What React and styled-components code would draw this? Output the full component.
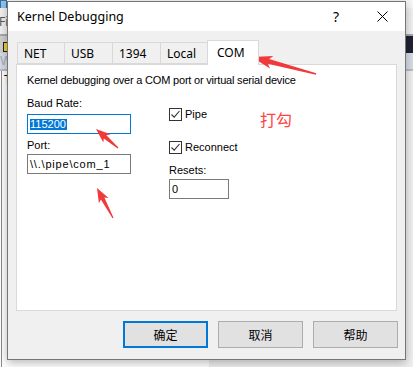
import React from "react";
import styled, { createGlobalStyle } from "styled-components";

const GlobalStyle = createGlobalStyle`
  html, body {
    margin: 0;
    padding: 0;
  }
  body {
    width: 413px;
    height: 367px;
    overflow: hidden;
    font-family: "Noto Sans", "Liberation Sans", sans-serif;
  }
`;

const tabs = [
  { label: "NET", w: 48 },
  { label: "USB", w: 49 },
  { label: "1394", w: 49 },
  { label: "Local", w: 48 },
  { label: "COM", w: 52, active: true },
];

// arrow with a tapered shaft, tail -> tip
const arrowPoints = (tail, tip, headLen, headW, w0, w1) => {
  const dx = tip[0] - tail[0];
  const dy = tip[1] - tail[1];
  const len = Math.hypot(dx, dy);
  const d = [dx / len, dy / len];
  const n = [-d[1], d[0]];
  const neck = [tip[0] - d[0] * headLen, tip[1] - d[1] * headLen];
  const barb = [tip[0] - d[0] * headLen * 1.2, tip[1] - d[1] * headLen * 1.2];
  const p = (b, s) => `${(b[0] + n[0] * s).toFixed(1)},${(b[1] + n[1] * s).toFixed(1)}`;
  return [
    p(tail, w0 / 2),
    p(neck, w1 / 2),
    p(barb, headW / 2),
    `${tip[0]},${tip[1]}`,
    p(barb, -headW / 2),
    p(neck, -w1 / 2),
    p(tail, -w0 / 2),
  ].join(" ");
};

/* ---------- the window behind ---------- */

const Desktop = styled.div`
  position: relative;
  width: 413px;
  height: 367px;
  overflow: hidden;
  display: flex;
  flex-direction: column;
  background: #fff;
`;

const TopStrip = styled.div`
  height: 8px;
  background: #f6f6f6;
  display: flex;
  align-items: center;
`;

const TinyIcon = styled.div`
  width: 5px;
  height: 7px;
  background: ${(p) => p.$color};
  border: 1px solid #3a6ea5;
`;

const MenuBar = styled.div`
  height: 26px;
  background: #f0f0f0;
  display: flex;
  align-items: center;
  justify-content: space-between;
  font-family: "Noto Sans", sans-serif;
  font-size: 12px;
  color: #555;
  border-bottom: 2px solid #a6a6a6;
`;

const MenuText = styled.span`
  margin-left: -1px;
`;

const ToolBar = styled.div`
  height: 17px;
  background: #cfcfcf;
  display: flex;
  align-items: center;
  justify-content: space-between;
`;

const ToolIcon = styled.div`
  width: 5px;
  height: 8px;
  margin-left: 3px;
  margin-top: 4px;
  background: #e8d23a;
  border: 1px solid #222;
`;

const DarkBlock = styled.div`
  width: 10px;
  height: 17px;
  background: #1f2233;
`;

const SubBar = styled.div`
  height: 16px;
  background: #d6dce6;
  border-bottom: 2px solid #b9bcc2;
  font-family: "Liberation Sans", sans-serif;
  font-size: 13px;
  line-height: 16px;
  color: #a8adb6;
`;

const LowerArea = styled.div`
  flex: 1;
  display: flex;
`;

const LeftPane = styled.div`
  flex: 1;
  margin-left: 1px;
  border-left: 1px solid #8a8a8a;
  background: #fff;
  font-family: "Liberation Sans", sans-serif;
  font-size: 12px;
  padding: 2px 0 0 2px;
  color: #000;
`;

const RightPane = styled.div`
  flex: 1;
  background: #efefef;
`;

/* ---------- dialog ---------- */

const Dialog = styled.div`
  position: absolute;
  left: 7px;
  top: 1px;
  width: 397px;
  height: 357px;
  border: 1px solid #767676;
  background: #f0f0f0;
  box-shadow: 0 3px 9px rgba(0, 0, 0, 0.28);
  display: flex;
  flex-direction: column;
`;

const TitleBar = styled.div`
  height: 29px;
  background: #fff;
  display: flex;
  align-items: center;
`;

const Title = styled.div`
  flex: 1;
  padding-left: 9px;
  font-family: "Noto Sans", sans-serif;
  font-size: 12.5px;
  color: #000;
`;

const TitleButton = styled.div`
  width: 46px;
  height: 29px;
  display: flex;
  align-items: center;
  justify-content: center;
  font-family: "Noto Sans", sans-serif;
  font-size: 14px;
  color: #000;
`;

const Body = styled.div`
  flex: 1;
  display: flex;
  flex-direction: column;
  padding: 9px 8px 0 8px;
`;

const TabStrip = styled.div`
  height: 24px;
  display: flex;
  align-items: flex-end;
  padding-left: 1px;
`;

const Tab = styled.div`
  position: relative;
  z-index: ${(p) => (p.$active ? 2 : 1)};
  box-sizing: border-box;
  width: ${(p) => p.$w}px;
  height: ${(p) => (p.$active ? 25 : 22)}px;
  margin-bottom: ${(p) => (p.$active ? -1 : 0)}px;
  margin-left: ${(p) => (p.$first ? 0 : -1)}px;
  padding-left: ${(p) => (p.$active ? 9 : 6)}px;
  padding-bottom: ${(p) => (p.$active ? 1 : 0)}px;
  border: 1px solid #d9d9d9;
  border-bottom: ${(p) => (p.$active ? "none" : "1px solid #d9d9d9")};
  background: ${(p) => (p.$active ? "#fff" : "#f0f0f0")};
  display: flex;
  align-items: center;
  font-family: "Noto Sans", sans-serif;
  font-size: 12px;
  color: #000;
`;

const Panel = styled.div`
  box-sizing: border-box;
  height: 247px;
  background: #fff;
  border: 1px solid #d9d9d9;
  padding: 9px 10px 0 10px;
  font-family: "Liberation Sans", Arial, sans-serif;
  font-size: 11px;
  line-height: 13px;
  color: #000;
`;

const Description = styled.div`
  height: 13px;
  margin-bottom: 10px;
  letter-spacing: -0.2px;
`;

const FormRow = styled.div`
  display: flex;
  gap: 38px;
`;

const Column = styled.div`
  display: flex;
  flex-direction: column;
  width: ${(p) => p.$w}px;
`;

const Label = styled.div`
  height: 13px;
  margin-top: ${(p) => p.$mt || 0}px;
`;

const Field = styled.div`
  box-sizing: border-box;
  width: ${(p) => p.$w}px;
  height: 20px;
  margin-top: ${(p) => p.$mt || 0}px;
  border: 1px solid ${(p) => (p.$focus ? "#0078d7" : "#7a7a7a")};
  background: #fff;
  display: flex;
  align-items: center;
  padding-left: 2px;
  letter-spacing: ${(p) => p.$spacing || 0}px;
`;

const Selected = styled.span`
  background: #0078d7;
  color: #fff;
  padding: 0 1px 0 0;
  line-height: 11px;
`;

const CheckRow = styled.div`
  display: flex;
  align-items: center;
  gap: 3px;
  height: 13px;
  margin-top: ${(p) => p.$mt}px;
`;

const Box = styled.div`
  box-sizing: border-box;
  width: 13px;
  height: 13px;
  border: 1px solid #333;
  background: #fff;
  display: flex;
`;

const Footer = styled.div`
  display: flex;
  justify-content: flex-end;
  gap: 10px;
  margin-top: 10px;
  margin-right: -1px;
`;

const Button = styled.div`
  box-sizing: border-box;
  width: 85px;
  height: 27px;
  background: #e1e1e1;
  border: ${(p) => (p.$default ? "2px solid #0078d7" : "1px solid #adadad")};
  display: flex;
  align-items: center;
  justify-content: center;
  font-family: "Noto Sans CJK SC", "Noto Sans", sans-serif;
  font-size: 12px;
  color: #000;
`;

/* ---------- red annotations ---------- */

const Overlay = styled.svg`
  position: absolute;
  left: 0;
  top: 0;
  pointer-events: none;
`;

const Note = styled.div`
  position: absolute;
  left: 260px;
  top: 111px;
  font-family: "Noto Sans CJK SC", sans-serif;
  font-size: 16px;
  line-height: 16px;
  color: #ff4242;
`;

const CheckMark = () => (
  <svg width="11" height="11" viewBox="0 0 11 11">
    <path d="M1.5 5.5 L4.2 8.2 L9.5 2" fill="none" stroke="#333" strokeWidth="1.1" />
  </svg>
);

const CloseIcon = () => (
  <svg width="11" height="11" viewBox="0 0 11 11">
    <path d="M0.5 0.5 L10.5 10.5 M10.5 0.5 L0.5 10.5" stroke="#000" strokeWidth="1" />
  </svg>
);

export default function App() {
  return (
    <Desktop>
      <GlobalStyle />
      <TopStrip>
        <TinyIcon $color="#8fc3e8" />
      </TopStrip>
      <MenuBar>
        <MenuText>Fi</MenuText>
      </MenuBar>
      <ToolBar>
        <ToolIcon />
        <DarkBlock />
      </ToolBar>
      <SubBar>W</SubBar>
      <LowerArea>
        <LeftPane>T</LeftPane>
        <RightPane />
      </LowerArea>

      <Dialog>
        <TitleBar>
          <Title>Kernel Debugging</Title>
          <TitleButton>?</TitleButton>
          <TitleButton>
            <CloseIcon />
          </TitleButton>
        </TitleBar>
        <Body>
          <TabStrip>
            {tabs.map((t, i) => (
              <Tab key={t.label} $w={t.w} $active={t.active} $first={i === 0}>
                {t.label}
              </Tab>
            ))}
          </TabStrip>
          <Panel>
            <Description>Kernel debugging over a COM port or virtual serial device</Description>
            <FormRow>
              <Column $w={104}>
                <Label>Baud Rate:</Label>
                <Field $w={104} $mt={4} $focus>
                  <Selected>115200</Selected>
                </Field>
                <Label $mt={5}>Port:</Label>
                <Field $w={104} $mt={2} $spacing={0.8}>
                  {"\\\\.\\pipe\\com_1"}
                </Field>
              </Column>
              <Column $w={60}>
                <CheckRow $mt={11}>
                  <Box>
                    <CheckMark />
                  </Box>
                  Pipe
                </CheckRow>
                <CheckRow $mt={20}>
                  <Box>
                    <CheckMark />
                  </Box>
                  Reconnect
                </CheckRow>
                <Label $mt={10}>Resets:</Label>
                <Field $w={60} $mt={2}>
                  0
                </Field>
              </Column>
            </FormRow>
          </Panel>
          <Footer>
            <Button $default>确定</Button>
            <Button>取消</Button>
            <Button>帮助</Button>
          </Footer>
        </Body>
      </Dialog>

      <Note>打勾</Note>
      <Overlay width="413" height="367">
        <polygon points={arrowPoints([316, 74], [252, 57], 17, 13, 1.5, 5)} fill="#f03a3a" />
        <polygon points={arrowPoints([118, 148], [96, 129], 12, 11, 1.2, 4)} fill="#f03a3a" />
        <polygon points={arrowPoints([113, 218], [97, 188], 12, 11, 1.2, 4)} fill="#f03a3a" />
      </Overlay>
    </Desktop>
  );
}
